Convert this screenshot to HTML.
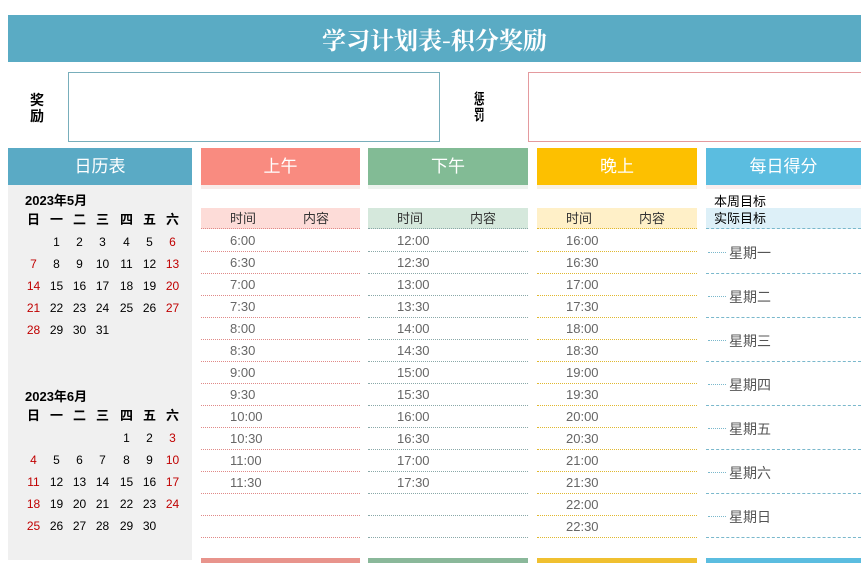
<!DOCTYPE html>
<html><head><meta charset="utf-8"><style>
*{margin:0;padding:0;box-sizing:border-box}
body{width:861px;height:563px;background:#fff;position:relative;overflow:hidden;font-family:"Liberation Sans","Noto Sans CJK SC",sans-serif}
.a{position:absolute}
.t{position:absolute;font-size:13px;color:#000;white-space:nowrap}
.h{position:absolute;top:148px;height:37px;color:#fff;font-size:17px;line-height:37px;text-align:center}
.sh{position:absolute;top:185px;height:4px}
.sub{position:absolute;top:208px;height:21px;font-size:13px;line-height:21px;color:#333}
.row{position:absolute;height:22px;font-size:13px;line-height:21px;color:#666}
.cal{position:absolute;width:23px;text-align:center;font-size:12px;line-height:22px;color:#000}
.r{color:#c00000}
</style></head><body>
<div class="a" style="left:8px;top:15px;width:853px;height:47px;background:#5aabc4;color:#fff;font-size:24px;line-height:47px;text-align:center;font-family:'Noto Serif CJK SC',serif;font-weight:bold">学习计划表-积分奖励</div>
<div class="t" style="left:30px;top:92px;font-weight:bold;font-size:14px;line-height:16px;width:14px">奖<br>励</div>
<div class="a" style="left:68px;top:72px;width:372px;height:70px;border:1px solid #78aebb"></div>
<div class="t" style="left:474px;top:92px;font-weight:bold;font-size:15px;line-height:16px;width:16px;transform:scaleX(0.7);transform-origin:left top">惩<br>罚</div>
<div class="a" style="left:528px;top:72px;width:340px;height:70px;border:1px solid #e49a9e"></div>

<div class="h" style="left:8px;width:184px;background:#5aaac5">日历表</div>
<div class="a" style="left:8px;top:185px;width:184px;height:375px;background:#f0f0f0"></div>
<div class="h" style="left:201px;width:159px;background:#f98b80">上午</div>
<div class="h" style="left:368px;width:160px;background:#82bb95">下午</div>
<div class="h" style="left:537px;width:160px;background:#fdc000">晚上</div>
<div class="h" style="left:706px;width:155px;background:#5bbde0">每日得分</div>
<div class="sh" style="left:201px;width:159px;background:#f8ece9"></div>
<div class="sh" style="left:368px;width:160px;background:#edf3ee"></div>
<div class="sh" style="left:537px;width:160px;background:#f9f1e2"></div>
<div class="sh" style="left:706px;width:155px;background:#f9eeee"></div>

<div class="a" style="left:201px;top:558px;width:159px;height:5px;background:#e8948c"></div>
<div class="a" style="left:368px;top:558px;width:160px;height:5px;background:#8ab89a"></div>
<div class="a" style="left:537px;top:558px;width:160px;height:5px;background:#f0c030"></div>
<div class="a" style="left:706px;top:558px;width:155px;height:5px;background:#5bbde0"></div>

<div id="cols"></div>
<div class="t" style="left:714px;top:191px">本周目标</div>
<div class="sub" style="left:706px;width:155px;background:#ddf0f8;border-bottom:1px dashed #7ab8cc;color:#000;padding-left:8px">实际目标</div>
<div id="cal"></div>
<script>
var o='';
function col(x,w,bg,line,times){
 o+='<div class="sub" style="left:'+x+'px;width:'+w+'px;background:'+bg+';border-bottom:1px dotted '+line+'"><span class="a" style="left:29px">时间</span><span class="a" style="left:102px">内容</span></div>';
 for(var i=0;i<14;i++){var y=230+i*22;o+='<div class="row" style="left:'+x+'px;top:'+y+'px;width:'+w+'px;border-bottom:1px dotted '+line+'"><span class="a" style="left:29px">'+(times[i]||'')+'</span></div>';}
}
function gen(h0,n){var a=[];for(var i=0;i<n;i++){a.push((h0+Math.floor(i/2))+':'+(i%2?'30':'00'));}return a;}
col(201,159,'#fddcd8','#e08a88',gen(6,12));
col(368,160,'#d5e8dc','#8aa8a8',gen(12,12));
col(537,160,'#fff0c8','#e0b830',gen(16,14));
var d=['一','二','三','四','五','六','日'];
for(var i=0;i<7;i++){var y=230+i*44;o+='<div class="a" style="left:706px;top:'+y+'px;width:155px;height:44px;border-bottom:1px dashed #7ab8cc"></div><div class="a" style="left:708px;top:'+(y+22)+'px;width:18px;border-top:1px dotted #7ab8cc"></div><div class="t" style="left:729px;top:'+(y+13)+'px;font-size:14px;color:#555">星期'+d[i]+'</div>';}
document.getElementById('cols').innerHTML=o;
var c='',xs=[33,56,79,102,126,149,172],wd=['日','一','二','三','四','五','六'];
function month(ty,title,start,days){
 c+='<div class="t" style="left:25px;top:'+(ty-8)+'px;font-weight:bold;font-size:13px">'+title+'</div>';
 for(var i=0;i<7;i++)c+='<div class="cal" style="left:'+(xs[i]-11)+'px;top:'+(ty+11)+'px;font-weight:bold;font-size:13px">'+wd[i]+'</div>';
 for(var n=1;n<=days;n++){var p=start+n-1,r=Math.floor(p/7),k=p%7;c+='<div class="cal'+(k==0||k==6?' r':'')+'" style="left:'+(xs[k]-11)+'px;top:'+(ty+33+r*22)+'px">'+n+'</div>';}
}
month(198,'2023年5月',1,31);
month(394,'2023年6月',4,30);
document.getElementById('cal').innerHTML=c;
</script>
</body></html>
